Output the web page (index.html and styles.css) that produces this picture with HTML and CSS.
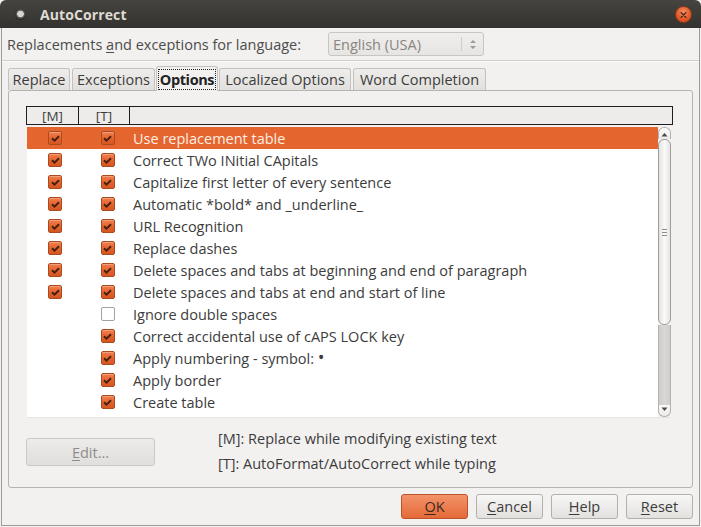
FILE: index.html
```html
<!DOCTYPE html>
<html>
<head>
<meta charset="utf-8">
<link rel="stylesheet" href="styles.css">
</head>
<body>
<div class="window">
  <div class="titlebar">
    <span class="title-icon"></span>
    <span class="title">AutoCorrect</span>
    <span class="close">
      <svg width="16" height="16" viewBox="0 0 16 16"><path d="M5.5 5.5l5 5M10.5 5.5l-5 5" stroke="#3b2116" stroke-width="1.4" stroke-linecap="round"/></svg>
    </span>
  </div>
  <div class="content">
    <div class="lang-row">
      <span class="lang-label">Replacements <u>a</u>nd exceptions for language:</span>
      <div class="combo">
        <span class="combo-text">English (USA)</span>
        <span class="combo-sep"></span>
        <svg class="combo-arrows" width="8" height="12" viewBox="0 0 8 12"><path d="M1 5L4 2L7 5Z M1 8L4 11L7 8Z" fill="#9c9a96"/></svg>
      </div>
    </div>
    <div class="separator"></div>
    <div class="tabs">
      <span class="tab t1">Replace</span>
      <span class="tab t2">Exceptions</span>
      <span class="tab t3 active"><span class="focus">Options</span></span>
      <span class="tab t4">Localized Options</span>
      <span class="tab t5">Word Completion</span>
    </div>
    <div class="panel">
      <div class="header">
        <span class="hcell hm">[M]</span>
        <span class="hcell ht">[T]</span>
        <span class="hcell hrest"></span>
      </div>
      <div class="list">
        <div class="rows" id="rows"></div>
        <div class="scrollbar">
          <div class="sb-top"><svg width="7" height="5" viewBox="0 0 7 5"><path d="M0.5 4.5L3.5 1L6.5 4.5Z" fill="#4a4a4a"/></svg></div>
          <div class="sb-thumb"><span class="grip"></span></div>
          <div class="sb-trough"></div>
          <div class="sb-bottom"><svg width="7" height="5" viewBox="0 0 7 5"><path d="M0.5 0.5L3.5 4L6.5 0.5Z" fill="#4a4a4a"/></svg></div>
        </div>
      </div>
      <div class="lower">
        <button class="btn edit"><u>E</u>dit...</button>
        <div class="legend">
          <div>[M]: Replace while modifying existing text</div>
          <div>[T]: AutoFormat/AutoCorrect while typing</div>
        </div>
      </div>
    </div>
    <div class="buttons">
      <button class="btn ok"><u>O</u>K</button>
      <button class="btn"><u>C</u>ancel</button>
      <button class="btn"><u>H</u>elp</button>
      <button class="btn"><u>R</u>eset</button>
    </div>
  </div>
</div>
<script>
var items = [
  ["Use replacement table",1,1],
  ["Correct TWo INitial CApitals",1,1],
  ["Capitalize first letter of every sentence",1,1],
  ["Automatic *bold* and _underline_",1,1],
  ["URL Recognition",1,1],
  ["Replace dashes",1,1],
  ["Delete spaces and tabs at beginning and end of paragraph",1,1],
  ["Delete spaces and tabs at end and start of line",1,1],
  ["Ignore double spaces",null,0],
  ["Correct accidental use of cAPS LOCK key",null,1],
  ["Apply numbering - symbol: <span class=\"bullet\">\u2022</span>",null,1],
  ["Apply border",null,1],
  ["Create table",null,1]
];
var check = '<svg width="9" height="7" viewBox="0 0 9 7"><path d="M1 3.2L3.5 5.6L8 1.2" fill="none" stroke="#43200f" stroke-width="1.9"/></svg>';
function box(v){
  if(v===null) return '<span class="cell"></span>';
  return '<span class="cell"><span class="cb'+(v?' on':'')+'">'+(v?check:'')+'</span></span>';
}
var html='';
items.forEach(function(it,i){
  html+='<div class="row'+(i===0?' sel':'')+'">'+box(it[1])+box(it[2])+'<span class="label">'+it[0]+'</span></div>';
});
document.getElementById('rows').innerHTML=html;
</script>
</body>
</html>
```
FILE: styles.css
```css
* { box-sizing: border-box; }
html, body { margin: 0; padding: 0; background: #f2f1f0; }
body { font-family: "Open Sans", "DejaVu Sans", sans-serif; font-size: 14.5px; color: #3c3c3c; }
u { text-decoration: underline; text-underline-offset: 2px; }

.window { width: 701px; height: 527px; display: flex; flex-direction: column; }

.titlebar {
  height: 28px; flex: none;
  background: linear-gradient(#45443f, #3a3935 60%, #33322e);
  border-radius: 6px 6px 0 0;
  display: flex; align-items: center;
  padding: 0 8px 0 15px;
}
.title-icon {
  width: 11px; height: 11px; border-radius: 50%;
  background: radial-gradient(circle at 50% 45%, #d8d6d0 0 3px, #6b6a66 3.5px, #2a2926 5.5px);
  margin-right: 14px;
}
.title { color: #dfdbd2; font-weight: bold; font-size: 14px; flex: 1; letter-spacing: 0.1px; }
.close {
  width: 17px; height: 17px; border-radius: 50%;
  background: radial-gradient(circle at 50% 35%, #f59068, #e25b27 55%, #c9441a);
  border: 1px solid #8e3a1c;
  display: flex; align-items: center; justify-content: center;
  margin-right: 1px; margin-top: 1px;
}

.content {
  flex: 1;
  border: 1px solid #9e9c98; border-top: none;
  margin: 0 1px 1px 1px;
  padding: 0 5px;
  display: flex; flex-direction: column;
}

.lang-row { display: flex; align-items: center; height: 32px; flex: none; }
.lang-label { color: #4c4c4c; width: 321px; }
.combo {
  width: 156px; height: 24px;
  border: 1px solid #c8c6c2; border-radius: 3px;
  background: linear-gradient(#efeeec, #e6e5e3);
  display: flex; align-items: center; padding: 0 6px 0 4px;
}
.combo-text { color: #8a8580; flex: 1; }
.combo-sep { width: 1px; height: 14px; background: #d0ceca; margin-right: 7px; }

.separator { height: 2px; flex: none; background: #cfcdc9; margin: 0 -5px; border-bottom: 1px solid #fbfbfa; }

.tabs { display: flex; align-items: flex-end; height: 28px; flex: none; padding-left: 1px; gap: 2px; position: relative; z-index: 1; }
.tab {
  height: 22px; padding: 0;
  border: 1px solid #c4c2be; border-bottom: none; border-radius: 3px 3px 0 0;
  background: linear-gradient(#eeedeb, #e2e0dd);
  display: flex; align-items: center; justify-content: center; color: #3c3c3c; white-space: nowrap;
}
.t1 { width: 62px; }
.t2 { width: 83px; }
.t3 { width: 62px; }
.t4 { width: 132px; }
.t5 { width: 133px; }
.tab.active { background: #f2f1f0; font-weight: bold; color: #222; margin-bottom: -1px; height: 25px; letter-spacing: -0.4px; margin-left: -1px; margin-right: -1px; }
.tab.active .focus { border: 1px dotted #222; padding: 0 1px; line-height: 19px; margin-top: 1px; }

.panel {
  height: 398px; flex: none;
  border: 1px solid #b6b4b0; border-radius: 3px;
  margin: 0 1px;
  padding: 15px 0 0 17px;
  display: flex; flex-direction: column;
}

.header {
  width: 647px; height: 19px; flex: none;
  display: flex; background: #edecea;
  border: 1px solid #1e1e1e;
}
.hcell { display: flex; align-items: center; justify-content: center; color: #3c3c3c; font-size: 13.5px; height: 17px; }
.hm { width: 52px; border-right: 1px solid #1e1e1e; }
.ht { width: 51px; border-right: 1px solid #1e1e1e; }
.hrest { flex: 1; }

.list {
  width: 644px; height: 291px; flex: none; margin: 2px 0 0 1px;
  background: #fff; display: flex;
  border-bottom: 1px solid #e6e5e3;
}
.rows { flex: 1; }
.row { height: 22px; display: flex; align-items: center; }
.row.sel { background: #e5652f; }
.row.sel .label { color: #fbeee4; }
.cell { width: 49px; flex: none; display: flex; justify-content: center; }
.cell:first-child { width: 56px; }
.cb {
  width: 14px; height: 14px; border-radius: 2px;
  border: 1px solid #a4a2a0; background: #fff;
  display: flex; align-items: center; justify-content: center;
}
.cb.on {
  border-color: #a94a1f;
  background: linear-gradient(#f08050, #e3622c 55%, #d65622);
  box-shadow: inset 0 1px 0 rgba(255,255,255,0.25);
}
.label { color: #3c3c3c; white-space: nowrap; margin-left: 1px; }
.bullet { font-size: 18px; line-height: 10px; }

.scrollbar { width: 13px; flex: none; display: flex; flex-direction: column; background: #f6f5f4; }
.sb-top, .sb-bottom {
  height: 12px; display: flex; align-items: center; justify-content: center;
  border: 1px solid #b3b1ad; background: linear-gradient(#fbfbfa, #eceae8);
}
.sb-top { border-radius: 6px 6px 0 0; border-bottom: none; padding-top: 2px; }
.sb-bottom { border-radius: 0 0 6px 6px; border-top: none; padding-bottom: 2px; }
.sb-thumb {
  height: 186px; border: 1px solid #9f9d99; border-radius: 6px;
  background: linear-gradient(90deg, #e4e2df, #fafaf9 50%, #e6e4e1);
  display: flex; align-items: center; justify-content: center;
}
.grip { width: 5px; height: 7px; background: repeating-linear-gradient(#8f8d89 0 1px, transparent 1px 3px); }
.sb-trough { flex: 1; background: linear-gradient(90deg, #cfcdc9, #dad8d5 50%, #cfcdc9); border-left: 1px solid #b3b1ad; border-right: 1px solid #b3b1ad; }

.lower { display: flex; margin-top: 8px; }
.btn {
  font-family: inherit; font-size: 14.5px; color: #3c3c3c;
  height: 25px; border: 1px solid #b2b0ac; border-radius: 3px;
  background: linear-gradient(#f7f7f6, #e3e1de);
  padding: 0; cursor: default;
}
.btn.edit { width: 129px; height: 28px; margin-top: 12px; color: #8f8c88; background: linear-gradient(#ecebea, #e0dfdd); border-color: #cbc9c5; }
.legend { margin-left: 63px; line-height: 25px; color: #3c3c3c; }

.buttons { display: flex; justify-content: flex-end; gap: 8px; padding-top: 6px; padding-right: 1px; }
.buttons .btn { width: 67px; }
.btn.ok { background: linear-gradient(#f3936a, #e46a37); border-color: #b9532a; color: #3c2a22; }
```
